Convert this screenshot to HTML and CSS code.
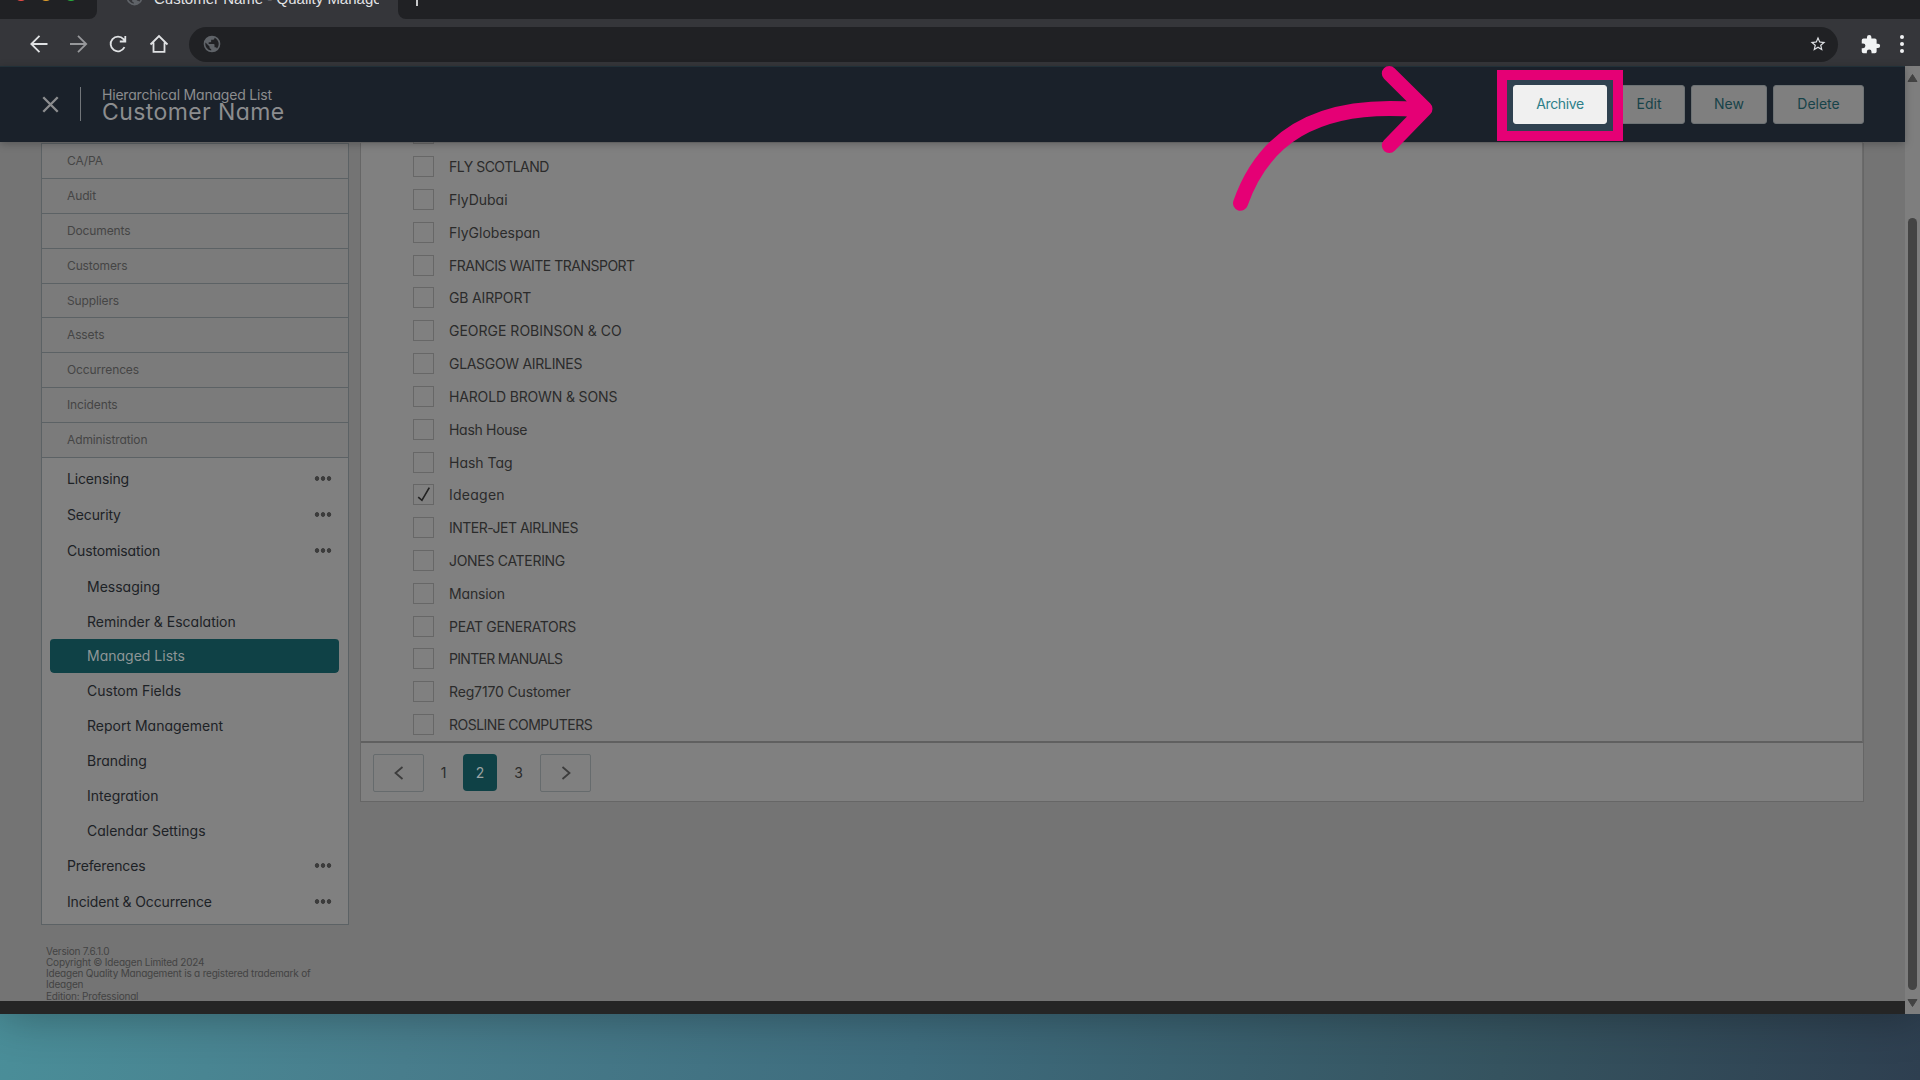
FILE: index.html
```html
<!DOCTYPE html>
<html lang="en">
<head>
    <meta charset="UTF-8">
    <meta name="viewport" content="width=device-width, initial-scale=1.0">
    <title>Customer Name - Quality Management</title>
    <link rel="stylesheet" href="styles.css">
</head>
<body>
    <div class="browser">
        <div class="tabs">
            <div class="tabs-left">
                <span class="light red"></span>
                <span class="light yellow"></span>
                <span class="light green"></span>
            </div>
            <div class="tab">
                <svg class="tab-globe" viewBox="0 0 24 24"><path d="M12 2a10 10 0 1 0 0 20 10 10 0 0 0 0-20zm-1 17.93A8 8 0 0 1 4.2 10.2L9 15v1a2 2 0 0 0 2 2zm6.9-2.53A2 2 0 0 0 16 16h-1v-3a1 1 0 0 0-1-1H8v-2h2a1 1 0 0 0 1-1V7h2a2 2 0 0 0 2-2v-.4a8 8 0 0 1 2.9 12.8z"/></svg>
                <span class="tab-title">Customer Name - Quality Management</span>
            </div>
            <div class="tabs-right"><span class="plus"></span></div>
        </div>
        <div class="toolbar">
            <svg class="nav-icon" viewBox="0 0 20 20"><path d="M18.500 10H3M10.500 1.800L2.300 10l8.200 8.200"/></svg>
            <svg class="nav-icon dim" viewBox="0 0 20 20"><path d="M1 10h15.500M9 1.800l8.200 8.200L9 18.200"/></svg>
            <svg class="nav-icon" viewBox="0 0 20 20"><path d="M15.500 13.200A7.300 7.300 0 1 1 14.500 5.200L16 7M16.300 2v5.500h-5.500"/></svg>
            <svg class="nav-icon" viewBox="0 0 20 20"><path d="M1.500 10.500L10 2l8.500 8.500M4.500 8.500v9.300h11V8.500"/></svg>
            <div class="address">
                <svg class="globe" viewBox="0 0 24 24"><path d="M12 2a10 10 0 1 0 0 20 10 10 0 0 0 0-20zm-1 17.930A8 8 0 0 1 4.200 10.200L9 15v1a2 2 0 0 0 2 2zm6.900-2.530A2 2 0 0 0 16 16h-1v-3a1 1 0 0 0-1-1H8v-2h2a1 1 0 0 0 1-1V7h2a2 2 0 0 0 2-2v-.4a8 8 0 0 1 2.900 12.800z"/></svg>
                <svg class="star" viewBox="0 0 24 24"><path d="M22 9.240l-7.190-.620L12 2 9.190 8.630 2 9.240l5.460 4.730L5.820 21 12 17.270 18.180 21l-1.630-7.030zM12 15.400l-3.760 2.270 1-4.280-3.320-2.880 4.380-.380L12 6.100l1.710 4.040 4.380.380-3.320 2.880 1 4.280z"/></svg>
            </div>
            <svg class="puzzle" viewBox="0 0 24 24"><path d="M20.500 11H19V7a2 2 0 0 0-2-2h-4V3.500a2.500 2.500 0 0 0-5 0V5H4a2 2 0 0 0-2 2v3.800h1.500a2.700 2.700 0 0 1 0 5.400H2V20a2 2 0 0 0 2 2h3.800v-1.500a2.700 2.700 0 0 1 5.400 0V22H17a2 2 0 0 0 2-2v-4h1.500a2.500 2.500 0 0 0 0-5z"/></svg>
            <svg class="menu" viewBox="0 0 6 20"><circle cx="3" cy="3" r="2"/><circle cx="3" cy="10" r="2"/><circle cx="3" cy="17" r="2"/></svg>
        </div>

        <div class="window">
            <div class="page">
                <header>
                    <svg class="close" viewBox="0 0 16 16"><path d="M1.200 1.200l13.600 13.600M14.800 1.200L1.200 14.800"/></svg>
                    <div class="titles">
                        <p>Hierarchical Managed List</p>
                        <h1>Customer Name</h1>
                    </div>
                    <div class="actions">
                        <button class="btn btn-archive">Archive</button>
                        <button class="btn btn-edit">Edit</button>
                        <button class="btn btn-new">New</button>
                        <button class="btn btn-delete">Delete</button>
                    </div>
                </header>
                <div class="container">
                    <aside>
                        <nav>
                            <ul class="modules">
                                <li>CA/PA</li>
                                <li>Audit</li>
                                <li>Documents</li>
                                <li>Customers</li>
                                <li>Suppliers</li>
                                <li>Assets</li>
                                <li>Occurrences</li>
                                <li>Incidents</li>
                                <li>Administration</li>
                            </ul>
                            <ul class="admin">
                                <li class="group"><span>Licensing</span><i class="dots"></i></li>
                                <li class="group"><span>Security</span><i class="dots"></i></li>
                                <li class="group"><span>Customisation</span><i class="dots"></i></li>
                                <li class="sub">Messaging</li>
                                <li class="sub">Reminder &amp; Escalation</li>
                                <li class="sub active">Managed Lists</li>
                                <li class="sub">Custom Fields</li>
                                <li class="sub">Report Management</li>
                                <li class="sub">Branding</li>
                                <li class="sub">Integration</li>
                                <li class="sub">Calendar Settings</li>
                                <li class="group"><span>Preferences</span><i class="dots"></i></li>
                                <li class="group"><span>Incident &amp; Occurrence</span><i class="dots"></i></li>
                            </ul>
                        </nav>
                        <div class="version">
                            Version 7.6.1.0<br>
                            Copyright © Ideagen Limited 2024<br>
                            Ideagen Quality Management is a registered trademark of<br>
                            Ideagen<br>
                            Edition: Professional
                        </div>
                    </aside>
                    <main>
                        <ul class="list">
                            <li><span class="box"></span></li>
                            <li class="narrow"><span class="box"></span>FLY SCOTLAND</li>
                            <li><span class="box"></span>FlyDubai</li>
                            <li><span class="box"></span>FlyGlobespan</li>
                            <li class="narrow"><span class="box"></span>FRANCIS WAITE TRANSPORT</li>
                            <li class="mixed"><span class="box"></span>GB AIRPORT</li>
                            <li><span class="box"></span>GEORGE ROBINSON &amp; CO</li>
                            <li class="caps"><span class="box"></span>GLASGOW AIRLINES</li>
                            <li class="mixed"><span class="box"></span>HAROLD BROWN &amp; SONS</li>
                            <li class="caps"><span class="box"></span>Hash House</li>
                            <li><span class="box"></span>Hash Tag</li>
                            <li class="wide"><span class="box"><svg viewBox="0 0 18 18"><path d="M4 11.500l3.500 3L14.500 2.500"/></svg></span>Ideagen</li>
                            <li class="narrow"><span class="box"></span>INTER-JET AIRLINES</li>
                            <li class="caps"><span class="box"></span>JONES CATERING</li>
                            <li class="mixed"><span class="box"></span>Mansion</li>
                            <li class="caps"><span class="box"></span>PEAT GENERATORS</li>
                            <li class="tight"><span class="box"></span>PINTER MANUALS</li>
                            <li class="mixed"><span class="box"></span>Reg7170 Customer</li>
                            <li class="narrow"><span class="box"></span>ROSLINE COMPUTERS</li>
                        </ul>
                        <div class="pagination">
                            <span class="step"><svg viewBox="0 0 10 14"><path d="M8.500 1L1.500 7l7 6"/></svg></span>
                            <span class="num">1</span>
                            <span class="num current">2</span>
                            <span class="num last">3</span>
                            <span class="step"><svg viewBox="0 0 10 14"><path d="M1.500 1l7 6-7 6"/></svg></span>
                        </div>
                    </main>
                </div>
                <div class="statusbar"></div>
            </div>
            <div class="scrollbar">
                <svg viewBox="0 0 13 10"><path d="M6.500 1.500L11 8.500H2z"/></svg>
                <div class="thumb"></div>
                <svg viewBox="0 0 13 10"><path d="M6.500 8.500L2 1.500h9z"/></svg>
            </div>
        </div>
    </div>

    <!-- callout over the Archive button -->
    <div class="highlight"></div>
    <svg class="arrow" viewBox="0 0 220 160">
        <path d="M20.500 143.300C42 82 92 40 200 50M169.300 13.500L205 48.800L169.300 85.500"/>
    </svg>
</body>
</html>
```
FILE: styles.css
```css
* {
    box-sizing: border-box;
}
body {
    margin: 0;
    height: 1080px;
    overflow: hidden;
    font-family: Inter, "Open Sans", sans-serif;
    font-feature-settings: "cv11";
    font-size: 14px;
    color: #1d2226;
    background: linear-gradient(100deg, #4b959e 0%, #487d8c 28%, #3e6c7d 52%, #35535f 80%, #2e3f50 100%);
}
ul {
    list-style: none;
    margin: 0;
    padding: 0;
}
.browser {
    height: 1014px;
    display: flex;
    flex-direction: column;
    box-shadow: 0 0 44px rgba(0, 0, 0, 0.32);
}
.tabs {
    height: 19px;
    display: flex;
    background: #35363a;
}
.tabs-left {
    width: 97px;
    display: flex;
    gap: 11px;
    padding-left: 14px;
    background: #202124;
    border-bottom-right-radius: 8px;
}
.light {
    width: 14px;
    height: 14px;
    margin-top: -13px;
    border-radius: 50%;
}
.red { background: #ee4d47; }
.yellow { background: #e3a02c; }
.green { background: #27b03c; }
.tab {
    width: 301px;
    display: flex;
    padding-left: 28px;
}
.tab-globe {
    width: 19px;
    height: 19px;
    margin-top: -12px;
    fill: #5f6368;
}
.tab-title {
    width: 225px;
    height: 20px;
    margin: -11px 0 0 10px;
    overflow: hidden;
    white-space: nowrap;
    font-family: "Liberation Sans", sans-serif;
    font-size: 15px;
    line-height: 20px;
    color: #e2e3e5;
}
.tabs-right {
    flex: 1;
    padding-left: 12px;
    background: #202124;
    border-bottom-left-radius: 8px;
}
.plus {
    display: block;
    width: 14px;
    height: 6px;
    background: linear-gradient(#c8c9cb, #c8c9cb) 6px 0 / 2px 6px no-repeat;
}
.toolbar {
    height: 47px;
    display: flex;
    align-items: center;
    padding: 3px 0 0 29px;
    background: #35363a;
}
.nav-icon {
    width: 20px;
    height: 20px;
    margin-right: 20px;
    fill: none;
    stroke: #e0e2e4;
    stroke-width: 1.800;
}
.dim {
    stroke: #97989b;
}
.address {
    width: 1649px;
    height: 35px;
    display: flex;
    justify-content: space-between;
    align-items: center;
    padding: 0 11px 0 13px;
    border-radius: 18px;
    background: #202124;
}
.globe {
    width: 20px;
    height: 20px;
    fill: #5f6368;
}
.star {
    width: 18px;
    height: 18px;
    fill: #dfe1e5;
}
.puzzle {
    width: 21px;
    height: 21px;
    margin-left: 22px;
    fill: #f1f3f4;
}
.menu {
    width: 6px;
    height: 20px;
    margin-left: 18px;
    fill: #f1f3f4;
}
.window {
    flex: 1;
    display: flex;
    min-height: 0;
}
.page {
    width: 1905px;
    display: flex;
    flex-direction: column;
    background: #747474;
}
header {
    position: relative;
    z-index: 1;
    height: 76px;
    display: flex;
    align-items: center;
    padding: 0 41px 1px 42px;
    background: #1a212a;
    border-top: 1px solid #213038;
    box-shadow: 0 2px 8px rgba(0, 0, 0, 0.25);
}
.close {
    width: 17px;
    height: 17px;
    fill: none;
    stroke: #8c8d8f;
    stroke-width: 2.200;
}
.titles {
    height: 34px;
    margin-left: 21px;
    padding-left: 21px;
    border-left: 1px solid #72767a;
    color: #8c8d8f;
}
.titles p {
    margin: 0;
    font-size: 14px;
    line-height: 15px;
    letter-spacing: -0.200px;
}
.titles h1 {
    margin: 0;
    font-size: 23px;
    line-height: 20px;
    font-weight: normal;
    letter-spacing: 0.400px;
}
.actions {
    display: flex;
    gap: 6px;
    margin-left: auto;
}
.btn {
    height: 39px;
    padding: 0 0 1px;
    border: 1px solid #6d7274;
    border-radius: 3px;
    background: #7f7f7f;
    font-family: inherit;
    font-feature-settings: inherit;
    font-size: 14px;
    color: #174349;
}
.btn-archive {
    width: 94px;
    border-color: #f0f0f0;
    background: #f0f0f0;
    box-shadow: 0 0 0 10px #2f4150;
    letter-spacing: -0.400px;
    color: #2e7f89;
}
.btn-edit { width: 72px; }
.btn-new { width: 76px; }
.btn-delete { width: 91px; }
.container {
    flex: 1;
    display: flex;
    align-items: flex-start;
    gap: 11px;
    min-height: 0;
    padding: 1px 41px 0 41px;
    overflow: hidden;
}
aside {
    width: 308px;
}
nav {
    border: 1px solid #5c6265;
    background: #808080;
}
.modules {
    background: #7b7b7b;
}
.modules li {
    height: 34.900px;
    padding: 0 25px;
    border-bottom: 1px solid #5c6265;
    font-size: 12px;
    line-height: 33px;
    letter-spacing: -0.120px;
    color: #454545;
}
.admin {
    padding: 3px 9px 4px 8px;
}
.group {
    height: 35.900px;
    display: flex;
    justify-content: space-between;
    align-items: center;
    padding: 0 7px 1px 17px;
    letter-spacing: -0.150px;
}
.dots {
    width: 18px;
    height: 5px;
    background: radial-gradient(circle, #3c3c3c 2px, transparent 2.600px) 0 0 / 6px 5px;
}
.sub {
    height: 34.900px;
    padding-left: 37px;
    line-height: 33px;
    border: solid transparent;
    border-width: 1px 0;
    background-clip: padding-box;
}
.active {
    border-bottom-width: 0;
    border-radius: 4px;
    background-color: #0f4146;
    color: #8e9697;
}
.version {
    padding: 21px 5px 0;
    font-size: 10px;
    line-height: 11.300px;
    letter-spacing: -0.200px;
    white-space: nowrap;
    color: #434343;
}
main {
    flex: 1;
    background: #808080;
    border: 1px solid #666;
    border-top: 0;
}
/* first row is scrolled up under the header */
.list {
    height: 625px;
    margin-top: -25.500px;
    padding-left: 52px;
    border-right: 1px solid #6b6b6b;
    border-bottom: 2px solid #606060;
}
.list li {
    height: 32.820px;
    display: flex;
    align-items: center;
    color: #2b2b2b;
}
.list .caps {
    letter-spacing: -0.300px;
}
.list .narrow {
    letter-spacing: -0.500px;
}
.list .tight {
    letter-spacing: -0.700px;
}
.list .mixed {
    letter-spacing: -0.150px;
}
.list .wide {
    letter-spacing: 0.250px;
}
.box {
    width: 21px;
    height: 21px;
    margin-right: 15px;
    border: 1px solid #676767;
}
.box svg {
    display: block;
    fill: none;
    stroke: #222;
    stroke-width: 1.600;
}
.pagination {
    height: 58px;
    display: flex;
    align-items: center;
    padding: 2px 0 0 12px;
    color: #2b2b2b;
}
.step {
    width: 51px;
    height: 38px;
    display: flex;
    justify-content: center;
    align-items: center;
    border: 1px solid #666b6d;
    border-radius: 2px;
}
.step svg {
    width: 10px;
    height: 14px;
    fill: none;
    stroke: #3c3c3c;
    stroke-width: 1.800;
}
.num {
    width: 39px;
    text-align: center;
}
.current {
    width: 34px;
    line-height: 37px;
    border-radius: 4px;
    background: #0f4146;
    color: #9aa3a3;
}
.last {
    width: 43px;
}
.statusbar {
    height: 13px;
    background: #252525;
}
.scrollbar {
    width: 15px;
    display: flex;
    flex-direction: column;
    align-items: center;
    padding: 7px 0 6px;
    background: #7e7e7e;
}
.scrollbar svg {
    width: 13px;
    height: 10px;
    fill: #434343;
    stroke: #434343;
    stroke-linejoin: round;
}
.thumb {
    width: 9px;
    height: 772px;
    margin: auto 0 8px;
    border-radius: 5px;
    background: #444;
}
.highlight {
    position: absolute;
    z-index: 2;
    left: 1497px;
    top: 70px;
    width: 126px;
    height: 71px;
    border: 10px solid #e50075;
}
.arrow {
    position: absolute;
    z-index: 2;
    left: 1220px;
    top: 60px;
    width: 220px;
    height: 160px;
    fill: none;
    stroke: #e50075;
    stroke-width: 15;
    stroke-linecap: round;
    stroke-linejoin: round;
}
```
